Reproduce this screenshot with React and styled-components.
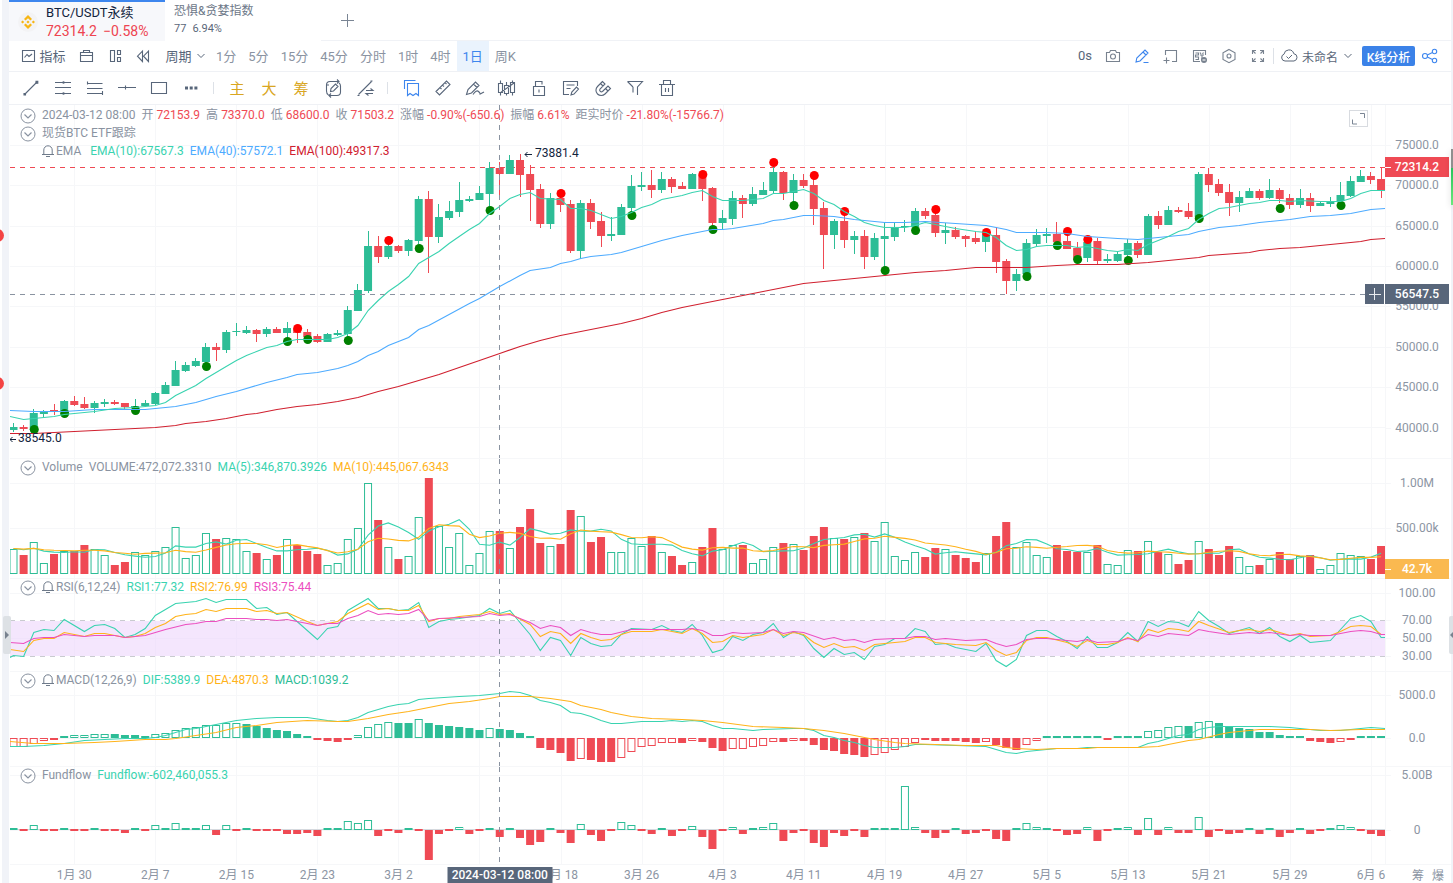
import React, { useState } from "react";
import styled, { createGlobalStyle } from "styled-components";

const GlobalStyle = createGlobalStyle`
  * { box-sizing: border-box; }
  body {
    margin: 0;
    background: #fff;
    font-family: Roboto, "Noto Sans CJK SC", sans-serif;
    font-size: 12px;
    color: #5b6779;
    overflow-x: hidden;
  }
  button { font-family: inherit; border: none; background: none; padding: 0; color: inherit; cursor: pointer; }
`;

const UP = "#2dbd96";
const DOWN = "#ef4a54";
const TEAL = "#39d3b0";
const YELLOW = "#ffb31a";
const BLUE = "#4dabff";
const CRIMSON = "#d0202f";
const PINK = "#ec4fc0";
const GRID = "#f6f7f9";
const SLATE = "#58667a";
const MUTED = "#8a93a1";
const DASH = "#8a93a1";

const Page = styled.div`
  display: flex;
  position: relative;
  min-height: 100vh;
  overflow: hidden;
`;

const Gutter = styled.div`
  flex: none;
  width: ${({ $wide }) => ($wide ? "9px" : "2px")};
  background: #f1f3f8;
  border-left: ${({ $wide }) => ($wide ? "2px solid #fff" : "none")};
`;

const Main = styled.main`
  flex: 1;
  min-width: 0;
`;

const Header = styled.header`
  display: flex;
  height: 41px;
`;

const Tab = styled.button`
  display: flex;
  align-items: center;
  gap: 8px;
  text-align: left;
  width: 156px;
  padding: ${({ $active }) => ($active ? "0 9px" : "0 9px 3px")};
  background: ${({ $active }) => ($active ? "#f7f8fb" : "#fff")};
  border-top: 2px solid ${({ $active }) => ($active ? "#3d86ee" : "transparent")};
`;

const TabTitle = styled.div`
  font-size: ${({ $main }) => ($main ? "13px" : "12px")};
  line-height: 18px;
  color: ${({ $main }) => ($main ? "#12243d" : "#6d7888")};
`;

const TabPrice = styled.div`
  display: flex;
  gap: 6px;
  font-size: ${({ $main }) => ($main ? "14px" : "11px")};
  line-height: 18px;
  color: ${({ $main }) => ($main ? "#ee4450" : "#5b6779")};
`;

const AddArea = styled.div`
  flex: 1;
  padding: 12px 19px;
  border-bottom: 1px solid #f0f2f6;
`;

const Toolbar = styled.div`
  display: flex;
  align-items: center;
  height: ${({ $tall }) => ($tall ? "33px" : "31px")};
  padding: ${({ $tall }) => ($tall ? "0 6px" : "0 11px 0 7px")};
  border-bottom: 1px solid #eff1f5;
`;

const ToolButton = styled.button`
  display: flex;
  align-items: center;
  justify-content: center;
  gap: ${({ $gap }) => $gap || 0}px;
  height: 100%;
  width: ${({ $width }) => $width}px;
  color: ${({ $tone }) => $tone || SLATE};
`;

const ToolText = styled.span`
  padding-bottom: 2px;
  font-size: ${({ $large }) => ($large ? "15px" : "13px")};
  white-space: nowrap;
`;

const Period = styled.button`
  height: 100%;
  padding: 0 6px 2px;
  font-size: 13px;
  white-space: nowrap;
  color: ${({ $active }) => ($active ? "#3d86ee" : MUTED)};
  background: ${({ $active }) => ($active ? "#eaf3fd" : "none")};
`;

const Spacer = styled.div`
  flex: 1;
`;

const Divider = styled.div`
  width: 1px;
  height: ${({ $tall }) => ($tall ? "16px" : "12px")};
  margin: ${({ $tall }) => ($tall ? "0 1px" : "0 7px 0 6px")};
  background: #dde1e7;
`;

const LayoutName = styled.button`
  display: flex;
  align-items: center;
  font-size: 12px;
  padding: 0 4px;
`;

const Analyse = styled.button`
  width: 53px;
  height: 20px;
  margin: 0 5px 0 6px;
  border-radius: 2px;
  background: #3b82e8;
  color: #fff;
  font-size: 12px;
  font-weight: 500;
  white-space: nowrap;
`;

const Pane = styled.section`
  display: flex;
  height: ${({ $height }) => $height}px;
  margin-left: 1px;
  border-bottom: 1px solid ${GRID};
`;

const Plot = styled.div`
  position: relative;
  flex: 1;
  min-width: 0;

  > svg {
    display: block;
    width: 100%;
    height: 100%;
  }
`;

const Axis = styled.div`
  position: relative;
  flex: none;
  width: 66px;
  border-left: 1px solid ${GRID};

  > svg { display: block; }

  text {
    fill: #8c95a3;
    font-size: 12px;
    text-anchor: middle;
  }
`;

const Legend = styled.div`
  position: absolute;
  top: ${({ $top }) => $top}px;
  left: 10px;
`;

const LegendRow = styled.div`
  display: flex;
  align-items: center;
  gap: 6px;
  height: 18px;
  line-height: 18px;
  padding-left: ${({ $indent }) => ($indent ? "22px" : "0")};
  white-space: nowrap;
`;

const LegendName = styled.span`
  display: flex;
  align-items: center;
  gap: 2px;
  height: 18px;
  color: ${MUTED};
`;

const LegendValue = styled.span`
  color: ${({ $color }) => $color};
`;

const Field = styled.span`
  display: flex;
  align-items: baseline;
  gap: 3px;
  height: 18px;
  color: ${MUTED};
`;

const Toggle = styled.button`
  width: 16px;
  height: 16px;
  margin-top: 2px;

  svg { display: block; }
`;

const ExpandButton = styled.button`
  position: absolute;
  top: 5px;
  right: 17px;
  width: 19px;
  height: 17px;
  border: 1px solid #d8dbe0;

  svg { display: block; }
`;

const PriceTag = styled.div`
  position: absolute;
  top: ${({ $top }) => $top}px;
  left: -1px;
  width: 64px;
  height: 20px;
  line-height: 20px;
  text-align: center;
  font-weight: 500;
  color: #fff;
  background: ${({ $color }) => $color};

  &::before {
    content: "";
    position: absolute;
    left: 0;
    top: 10px;
    width: 6px;
    height: ${({ $tick }) => ($tick ? "1px" : "0")};
    background: #fff;
  }
`;

const AddAlert = styled.button`
  position: absolute;
  top: 179px;
  right: 0;
  width: 20px;
  height: 20px;
  background: ${SLATE};
  border-right: 1px solid #fff;

  svg { display: block; }
`;

const TimeAxis = styled.div`
  display: flex;
  height: 19px;
  margin-left: 1px;

  text {
    fill: #8c95a3;
    font-size: 12px;
    text-anchor: middle;
  }
`;

const TimeTag = styled.div`
  position: absolute;
  top: 2px;
  left: ${({ $at }) => $at}%;
  transform: translateX(-50%);
  width: 105px;
  height: 17px;
  line-height: 17px;
  text-align: center;
  font-weight: 500;
  color: #fff;
  background: ${SLATE};
`;

const AxisButtons = styled.div`
  display: flex;
  align-items: center;
  justify-content: center;
  gap: 8px;
  flex: none;
  width: 66px;
  padding-left: 20px;
  color: #8c95a3;

  button { font-size: 12px; }
`;

const SideHandle = styled.button`
  position: absolute;
  top: 616px;
  ${({ $right }) => ($right ? "right: -4px;" : "left: 3px;")}
  width: 8px;
  height: 38px;
  border-radius: 2px;
  background: #dde1e5;

  svg { display: block; }
`;

const EdgeDot = styled.div`
  position: absolute;
  left: -9px;
  top: ${({ $top }) => $top}px;
  width: 13px;
  height: 13px;
  border-radius: 50%;
  background: #f44343;
`;

const EdgeBar = styled.div`
  position: absolute;
  right: 0;
  top: 149px;
  width: 2px;
  height: 56px;
  background: linear-gradient(#8f8f8f 19px, #27c45c 19px, #6be87c);
  box-shadow: 0 2px 6px rgba(0, 0, 0, 0.2);
`;

// [rising, body top, body bottom, high, low]
const candles = [
  [1, 427, 430, 423, 432], [0, 427, 429, 425, 431], [1, 413, 430, 409, 430], [1, 411, 414, 410, 417],
  [0, 410, 411, 404, 415], [1, 401, 411, 400, 412], [0, 401, 405, 396, 406], [0, 404, 408, 397, 409],
  [1, 403, 408, 401, 413], [1, 402, 404, 399, 407], [0, 402, 404, 400, 405], [0, 403, 407, 403, 409],
  [1, 406, 408, 399, 413], [1, 403, 406, 400, 407], [1, 393, 404, 392, 405], [1, 385, 394, 382, 394],
  [1, 370, 386, 361, 386], [1, 365, 371, 362, 372], [1, 361, 366, 358, 367], [1, 347, 362, 343, 364],
  [0, 347, 350, 343, 361], [1, 332, 350, 330, 353], [1, 331, 332, 323, 336], [1, 330, 333, 326, 334],
  [0, 330, 334, 329, 342], [1, 329, 334, 327, 337], [0, 329, 333, 327, 333], [1, 328, 333, 322, 338],
  [0, 329, 333, 328, 343], [0, 332, 337, 329, 340], [0, 336, 342, 334, 343], [1, 334, 342, 333, 342],
  [1, 333, 335, 330, 336], [1, 310, 334, 306, 337], [1, 290, 311, 284, 311], [1, 246, 291, 231, 293],
  [0, 246, 257, 236, 263], [1, 246, 257, 243, 259], [0, 246, 251, 245, 253], [1, 240, 251, 239, 256],
  [1, 199, 241, 196, 244], [0, 199, 237, 191, 273], [1, 217, 237, 204, 243], [1, 211, 218, 201, 220],
  [1, 200, 212, 182, 217], [1, 199, 201, 196, 202], [1, 193, 200, 186, 200], [1, 168, 194, 162, 208],
  [0, 168, 174, 162, 200], [1, 160, 174, 155, 174], [0, 160, 175, 154, 197], [0, 174, 190, 165, 221],
  [0, 189, 224, 184, 228], [1, 198, 224, 193, 229], [0, 198, 205, 193, 212], [0, 204, 251, 200, 253],
  [1, 203, 251, 200, 259], [0, 203, 222, 199, 229], [0, 221, 236, 212, 247], [1, 234, 236, 217, 241],
  [1, 207, 235, 204, 235], [1, 186, 208, 175, 212], [1, 185, 187, 172, 191], [0, 185, 190, 170, 198],
  [1, 179, 190, 172, 193], [0, 179, 187, 177, 193], [0, 186, 189, 182, 189], [1, 174, 189, 173, 189],
  [0, 175, 189, 173, 201], [0, 188, 223, 187, 228], [1, 218, 223, 210, 229], [1, 198, 219, 191, 225],
  [0, 198, 204, 195, 218], [1, 194, 204, 187, 206], [1, 190, 195, 182, 195], [1, 172, 191, 162, 193],
  [0, 172, 193, 171, 200], [1, 180, 193, 174, 205], [0, 180, 186, 174, 188], [0, 185, 209, 175, 225],
  [0, 208, 235, 202, 269], [1, 221, 235, 219, 249], [0, 221, 240, 211, 248], [1, 236, 240, 231, 254],
  [0, 236, 257, 230, 269], [1, 238, 257, 233, 260], [1, 236, 239, 222, 269], [1, 227, 237, 223, 241],
  [1, 226, 227, 220, 232], [1, 211, 227, 208, 230], [0, 211, 216, 208, 219], [0, 215, 233, 210, 237],
  [1, 230, 233, 223, 244], [0, 230, 237, 227, 239], [0, 236, 239, 235, 247], [0, 238, 242, 232, 244],
  [1, 234, 242, 232, 252], [0, 235, 262, 227, 273], [0, 261, 281, 259, 294], [1, 274, 281, 269, 291],
  [1, 243, 274, 239, 276], [1, 235, 244, 229, 246], [1, 234, 236, 228, 243], [0, 234, 242, 222, 244],
  [0, 241, 249, 232, 249], [0, 248, 260, 242, 261], [1, 242, 258, 240, 262], [0, 241, 261, 238, 265],
  [1, 259, 261, 254, 263], [1, 254, 261, 251, 262], [1, 243, 255, 239, 258], [0, 243, 255, 241, 258],
  [1, 216, 255, 214, 255], [0, 216, 225, 211, 229], [1, 210, 225, 206, 225], [0, 210, 212, 207, 213],
  [0, 211, 217, 203, 219], [1, 174, 217, 172, 217], [0, 174, 185, 168, 192], [0, 184, 193, 179, 196],
  [0, 192, 203, 184, 216], [1, 197, 203, 191, 212], [1, 191, 198, 188, 198], [0, 191, 198, 189, 200],
  [1, 190, 198, 179, 199], [0, 190, 199, 188, 203], [0, 198, 205, 194, 209], [1, 198, 205, 189, 208],
  [0, 198, 206, 193, 212], [1, 203, 206, 201, 206], [1, 202, 204, 197, 207], [1, 195, 201, 182, 203],
  [1, 181, 196, 176, 197], [1, 176, 182, 170, 182], [0, 176, 180, 172, 184], [0, 179, 190, 168, 198],
];

// [bar, y]
const sellDots = [
  [28, 328], [37, 240], [54, 193], [68, 174], [75, 162], [79, 175], [82, 211], [91, 209], [96, 232], [104, 231], [106, 239],
];
const buyDots = [
  [2, 429], [5, 413], [12, 410], [19, 366], [27, 341], [29, 339], [33, 340], [40, 248], [47, 210], [61, 215], [69, 229],
  [77, 205], [86, 270], [89, 230], [100, 276], [103, 245], [105, 259], [110, 260], [117, 218], [125, 208], [131, 205],
];

// line data: bar, y, bar, y ...
const ema10 = [
  -0.35, 416, 1, 419, 2, 418, 4, 416, 5, 414, 6, 413, 8, 411, 10, 408, 12, 407, 13, 406, 14, 405, 15, 402, 16, 395,
  18, 385, 19, 378, 20, 372, 21, 366, 22, 360, 23, 355, 24, 351, 25, 347, 26, 345, 27, 341, 28, 339, 30, 339, 31, 339,
  32, 337, 33, 333, 34, 325, 35, 310, 36, 300, 37, 291, 38, 284, 39, 276, 40, 263, 41, 257, 42, 251, 43, 243, 44, 236,
  45, 229, 46, 223, 47, 213, 48, 206, 49, 198, 50, 194, 51, 192, 52, 198, 54, 199, 55, 208, 56, 208, 57, 210, 58, 214,
  59, 218, 60, 216, 61, 212, 62, 207, 63, 204, 64, 199, 65, 197, 66, 195, 67, 192, 68, 190, 69, 196, 70, 200, 72, 200,
  73, 199, 74, 198, 75, 193, 76, 193, 77, 191, 78, 189, 79, 193, 80, 200, 81, 204, 82, 211, 83, 216, 84, 222, 85, 225,
  86, 227, 88, 227, 89, 225, 90, 222, 91, 224, 93, 228, 95, 231, 96, 232, 97, 237, 98, 245, 99, 250, 100, 249, 101, 246,
  102, 245, 104, 245, 105, 247, 106, 246, 107, 248, 108, 250, 109, 251, 110, 249, 111, 250, 112, 244, 113, 240, 114, 236,
  115, 231, 116, 228, 117, 219, 118, 213, 119, 208, 120, 207, 121, 205, 122, 203, 123, 202, 124, 200, 125, 200, 126, 201,
  127, 200, 129, 201, 131, 201, 132, 198, 133, 193, 134, 190, 135.4, 190,
];
const ema40 = [
  -0.35, 410, 2, 411, 5, 411, 8, 409, 13, 409, 15, 407, 16, 406, 18, 402, 19, 399, 20, 396, 22, 391, 24, 385, 25, 382,
  27, 377, 28, 374, 30, 372, 32, 368, 33, 365, 34, 361, 35, 355, 36, 351, 37, 345, 39, 337, 40, 329, 41, 325, 43, 314,
  45, 303, 46, 298, 47, 292, 48, 286, 50, 275, 51, 270, 53, 267, 54, 263, 55, 261, 56, 258, 57, 256, 59, 254, 60, 252,
  62, 246, 64, 240, 66, 235, 68, 231, 69, 229, 70, 229, 71, 228, 74, 223, 75, 220, 76, 219, 78, 215, 79, 215, 81, 216,
  83, 219, 86, 222, 88, 222, 90, 221, 93, 223, 96, 225, 98, 229, 99, 232, 102, 232, 104, 233, 106, 236, 109, 238,
  111, 239, 114, 236, 116, 234, 117, 231, 119, 227, 121, 225, 123, 222, 126, 219, 128, 216, 130, 215, 131, 214, 132, 213,
  134, 209, 135.4, 208,
];
const ema100 = [
  -0.35, 433, 2, 433, 6, 431, 10, 429, 14, 427, 16, 425, 17, 423, 19, 421, 21, 418, 23, 414, 24, 413, 26, 409, 28, 406,
  30, 404, 32, 401, 34, 397, 36, 391, 38, 386, 40, 380, 42, 374, 44, 367, 46, 360, 48, 353, 50, 346, 52, 340, 54, 335,
  55, 333, 57, 329, 60, 323, 62, 318, 64, 312, 66, 307, 68, 303, 71, 297, 74, 291, 77, 285, 78, 283, 81, 280, 83, 278,
  86, 275, 89, 272, 92, 270, 95, 267, 100, 267, 103, 265, 105, 264, 109, 264, 112, 262, 116, 258, 117, 257, 118, 255,
  122, 252, 123, 250, 125, 248, 127, 247, 130, 244, 133, 241, 134, 239, 135.4, 238,
];

const volume = [
  25, 19, 32, 11, 20, 23, 23, 29, 25, 19, 9, 12, 22, 19, 23, 27, 47, 16, 19, 41, 35, 36, 35, 23, 21, 15, 19, 35, 29, 23,
  20, 9, 11, 35, 46, 91, 54, 27, 15, 18, 57, 96, 48, 27, 41, 9, 21, 43, 43, 26, 47, 65, 31, 28, 30, 64, 58, 32, 37, 22,
  22, 36, 28, 38, 22, 18, 9, 12, 27, 46, 25, 29, 29, 11, 15, 27, 31, 30, 24, 38, 47, 36, 35, 37, 41, 33, 52, 18, 14, 22,
  17, 26, 25, 19, 16, 12, 21, 38, 52, 27, 32, 19, 17, 29, 23, 22, 22, 29, 10, 9, 24, 23, 33, 22, 20, 10, 14, 33, 25, 19,
  28, 17, 8, 9, 15, 22, 15, 18, 19, 5, 9, 21, 19, 18, 15, 28,
];

const rsi6 = [
  -0.35, 657, 0, 655, 1, 656, 2, 632, 3, 629, 4, 630, 5, 619, 7, 631, 8, 625, 9, 624, 10, 628, 11, 637, 12, 634, 13, 628,
  14, 615, 16, 603, 17, 602, 18, 601, 19, 598, 20, 602, 21, 599, 23, 599, 24, 608, 25, 607, 26, 614, 27, 612, 28, 621,
  30, 639, 31, 628, 32, 626, 33, 610, 34, 604, 35, 598, 36, 608, 37, 608, 38, 610, 39, 609, 40, 602, 41, 627, 42, 621,
  43, 619, 44, 618, 46, 615, 47, 608, 48, 613, 49, 610, 50, 622, 51, 634, 52, 650, 53, 637, 54, 640, 55, 655, 56, 637,
  57, 643, 58, 646, 59, 645, 60, 634, 61, 628, 63, 629, 64, 625, 65, 630, 66, 632, 67, 624, 68, 635, 69, 652, 70, 649,
  71, 636, 72, 640, 73, 634, 74, 632, 75, 623, 76, 637, 77, 631, 78, 635, 79, 648, 80, 657, 81, 648, 82, 654, 83, 652,
  84, 659, 85, 646, 86, 644, 87, 638, 88, 638, 89, 628, 90, 631, 91, 644, 92, 643, 93, 647, 95, 651, 96, 643, 97, 660,
  98, 666, 99, 659, 100, 635, 101, 630, 102, 630, 103, 636, 104, 641, 105, 648, 106, 636, 107, 647, 108, 647, 109, 642,
  110, 632, 111, 641, 112, 621, 113, 626, 114, 621, 115, 622, 116, 626, 117, 611, 118, 620, 119, 626, 120, 633, 121, 630,
  122, 627, 123, 633, 124, 627, 125, 636, 126, 641, 127, 635, 128, 642, 129, 641, 130, 640, 131, 629, 132, 618, 133, 615,
  134, 621, 135, 637, 135.4, 637,
];
const rsi12 = [
  -0.35, 649, 1, 651, 2, 640, 3, 638, 4, 638, 5, 632, 6, 634, 7, 636, 8, 633, 9, 633, 10, 635, 11, 637, 12, 636, 13, 633,
  14, 627, 15, 623, 16, 616, 17, 614, 18, 613, 19, 609, 20, 611, 21, 608, 23, 608, 24, 611, 25, 610, 26, 613, 27, 612,
  29, 621, 30, 625, 31, 623, 32, 621, 33, 613, 35, 603, 36, 609, 37, 608, 38, 610, 39, 610, 40, 605, 41, 621, 42, 618,
  43, 618, 44, 616, 46, 614, 47, 611, 48, 614, 49, 613, 51, 624, 52, 636, 53, 631, 54, 633, 55, 643, 56, 633, 57, 637,
  58, 640, 59, 639, 60, 634, 61, 631, 63, 631, 64, 629, 66, 633, 67, 628, 68, 633, 69, 642, 70, 641, 71, 635, 72, 637,
  74, 634, 75, 629, 76, 635, 77, 632, 78, 634, 79, 642, 80, 647, 81, 643, 82, 647, 83, 646, 84, 650, 85, 644, 87, 642,
  88, 641, 89, 637, 90, 637, 91, 642, 93, 644, 95, 645, 96, 642, 97, 650, 98, 655, 99, 652, 100, 640, 101, 637, 102, 637,
  104, 642, 105, 646, 106, 640, 107, 644, 108, 644, 109, 642, 110, 637, 111, 641, 112, 629, 113, 632, 114, 628, 115, 629,
  116, 631, 117, 621, 118, 625, 120, 632, 121, 630, 122, 629, 123, 631, 124, 629, 126, 635, 127, 633, 128, 636, 130, 635,
  131, 631, 132, 626, 133, 625, 134, 626, 135, 634, 135.4, 634,
];
const rsi24 = [
  -0.35, 642, 1, 643, 2, 638, 3, 637, 4, 637, 5, 634, 7, 636, 8, 635, 10, 635, 11, 637, 13, 635, 15, 629, 17, 624, 18, 623,
  19, 621, 20, 621, 21, 618, 23, 618, 24, 619, 25, 619, 26, 620, 27, 619, 29, 623, 30, 625, 31, 623, 32, 623, 33, 618,
  34, 615, 35, 610, 36, 614, 37, 613, 38, 614, 39, 613, 40, 609, 41, 620, 42, 618, 44, 617, 46, 616, 47, 613, 48, 615,
  49, 614, 51, 622, 52, 628, 53, 625, 54, 627, 55, 635, 56, 629, 57, 632, 58, 634, 59, 634, 61, 629, 63, 629, 66, 629,
  67, 628, 68, 630, 69, 635, 70, 635, 71, 632, 72, 633, 74, 632, 75, 629, 76, 633, 77, 631, 78, 632, 80, 639, 81, 637,
  82, 640, 83, 639, 84, 642, 85, 639, 87, 638, 88, 638, 89, 636, 90, 636, 91, 639, 92, 638, 94, 640, 96, 639, 97, 643,
  98, 646, 99, 644, 100, 639, 101, 638, 102, 638, 104, 640, 105, 641, 106, 639, 107, 642, 109, 641, 110, 638, 111, 640,
  112, 634, 113, 636, 114, 633, 116, 635, 117, 629, 118, 631, 120, 634, 121, 633, 122, 632, 123, 633, 124, 632, 126, 635,
  127, 634, 128, 635, 130, 635, 131, 633, 132, 631, 133, 630, 134, 631, 135, 634, 135.4, 634,
];

const macd = [
  -9, -8.5, -6, -3, -2, 2, 3, 3.1, 4, 4.1, 4, 3, 3, 2, 4, 5, 8, 10, 11, 13, 13.1, 15, 15.1, 14, 12, 10, 8, 7, 4, 2, -2, -3,
  -4, -1, 3, 11, 14, 16, 15, 15, 19, 15, 13, 12, 11, 10, 8, 10, 9, 8, 5, 1, -10, -12, -15, -23, -21, -22, -24, -24, -20,
  -14, -9, -8, -5, -4.5, -5, -3, -4, -10, -13, -11, -10.5, -9, -8, -4, -4, -3, -3, -7, -12, -13, -16, -17, -19, -17, -15,
  -12, -9, -5, -2, -3, -3, -3, -4, -5, -4, -7, -10, -12, -7, -3, 2, 2, 2, 2, 2, 1, -1, 1, 2, 2, 7, 8, 11, 12, 12, 16, 17,
  15, 12, 10, 9, 6, 6, 3, 2, 1, -3, -4, -5, -3.5, -2, 2, 2, 1,
];
const dif = [
  -0.35, 746, 1, 746, 3, 745, 5, 743, 7, 740, 9, 739, 11, 738, 13, 738, 14, 737, 15, 735, 16, 732, 17, 729, 18, 728,
  19, 726, 20, 724, 21, 722, 22, 720, 24, 718, 26, 717, 29, 717, 31, 720, 32, 721, 33, 720, 34, 717, 35, 712, 37, 706,
  38, 704, 39, 703, 40, 699, 41, 698, 44, 696, 46, 695, 48, 693, 49, 691, 50, 692, 51, 695, 52, 700, 53, 702, 54, 705,
  55, 712, 56, 713, 57, 716, 58, 720, 59, 723, 60, 723, 62, 721, 64, 721, 65, 720, 66, 721, 67, 720, 68, 721, 69, 725,
  70, 728, 71, 728, 73, 730, 74, 729, 77, 728, 78, 728, 79, 730, 80, 735, 81, 737, 82, 740, 83, 742, 84, 745, 85, 747,
  87, 747, 88, 746, 89, 744, 90, 744, 93, 745, 96, 746, 97, 749, 98, 752, 99, 753, 100, 751, 101, 750, 103, 748, 105, 748,
  106, 747, 111, 747, 112, 743, 113, 741, 114, 738, 115, 735, 116, 734, 117, 729, 118, 727, 119, 726, 124, 726, 126, 727,
  128, 729, 129, 730, 131, 730, 133, 728, 134, 727, 135.4, 728,
];
const dea = [
  -0.35, 741, 2, 743, 5, 743, 8, 742, 10, 741, 13, 739, 15, 739, 16, 738, 18, 735, 20, 732, 22, 727, 24, 725, 26, 722,
  29, 720, 32, 721, 33, 721, 35, 718, 37, 714, 39, 711, 41, 707, 43, 703, 45, 701, 47, 698, 48, 696, 51, 696, 53, 698,
  55, 701, 56, 705, 58, 709, 59, 712, 61, 716, 63, 718, 66, 719, 68, 720, 69, 721, 70, 722, 73, 726, 76, 727, 78, 728,
  80, 730, 82, 733, 83, 735, 84, 737, 85, 739, 87, 742, 88, 743, 91, 744, 94, 745, 97, 745, 98, 747, 99, 748, 101, 749,
  103, 748, 106, 748, 107, 747, 111, 747, 113, 746, 115, 742, 116, 740, 117, 739, 119, 734, 120, 732, 122, 730, 123, 729,
  128, 729, 130, 730, 133, 729, 135.4, 729,
];

const fundflow = [
  2, -1, 5, -1, -1, 2, -1, -1, 1, -1, -2, -3, 1, -1, 5, 2, 7, 2, 1, 5, -5, 5, -2, 1, -2, -2, -2, -4, -4, -3, -6, 2, 1, 9,
  7, 10, -6, -1, -3, 2, -2, -30, -4, -1, 3, -4, -2, 2, -7, 2, -8, -15, -12, 2, -3, -13, 6, -5, -11, -2, 8, 5, -1, -4, 2,
  -6, -2, 4, -7, -19, -2, 3, -4, 2, 3, 7, -11, -3, -2, -13, -17, -3, -6, -2, -7, 2, 2, 2, 44, 3, -3, -8, -3, 1, -4, -3,
  -2, -9, -11, 1, 7, 3, 2, -2, -5, -4, 3, -11, -1, 1, 3, -5, 12, -5, 3, -3, -3, 13, -7, -1, -4, -3, 2, -4, 2, -7, -3, 2,
  -4, -2, 2, 5, 3, -2, -4, -6,
];

const dates = [
  "1月 30", "2月 7", "2月 15", "2月 23", "3月 2", "3月 10", "3月 18", "3月 26", "4月 3", "4月 11", "4月 19", "4月 27",
  "5月 5", "5月 13", "5月 21", "5月 29", "6月 6",
];

const WIDTH = 1375;
const CURSOR = 48;
const xAt = (i) => 3.5 + i * 10.13;
const dateBar = (k) => 6 + k * 8;

const average = (values, size) => {
  const padded = [...Array(size - 1).fill(25), ...values];
  return values.flatMap((_, i) => [i, 573 - padded.slice(i, i + size).reduce((a, b) => a + b, 0) / size]);
};

const Line = ({ data, color }) => {
  const points = [];
  for (let i = 0; i < data.length; i += 2) points.push(`${xAt(data[i]).toFixed(1)},${data[i + 1] + 0.5}`);
  return <polyline points={points.join(" ")} fill="none" stroke={color} strokeWidth="1.1" />;
};

const Bar = ({ i, top, height, color, hollow }) =>
  hollow ? (
    <rect x={xAt(i) - 3.5} y={top + 0.5} width="7" height={Math.max(height - 1, 1)} fill="#fff" stroke={color} />
  ) : (
    <rect x={xAt(i) - 4} y={top} width="8" height={height} fill={color} />
  );

const Canvas = ({ top, height, lines, children }) => (
  <svg viewBox={`0 ${top} ${WIDTH} ${height}`} preserveAspectRatio="none">
    {dates.map((d, k) => {
      const x = Math.round(xAt(dateBar(k))) + 0.5;
      return <line key={d} x1={x} x2={x} y1={top} y2={top + height} stroke={GRID} />;
    })}
    {lines.map((y) => <line key={y} x1="0" x2={WIDTH} y1={y + 0.5} y2={y + 0.5} stroke={GRID} />)}
    {children}
    <line x1="489.5" x2="489.5" y1={top} y2={top + height} stroke={DASH} strokeDasharray="5 5" />
  </svg>
);

const Scale = ({ top, height, ticks }) => (
  <svg width="65" height={height} viewBox={`0 ${top} 65 ${height}`}>
    {ticks.map(([label, y]) => (
      <g key={label}>
        <line x1="0" x2="5" y1={y + 0.5} y2={y + 0.5} stroke={GRID} />
        <text x="31" y={y + 4}>{label}</text>
      </g>
    ))}
  </svg>
);

const Icon = ({ children, width = 1.1 }) => (
  <svg width="20" height="20" viewBox="0 0 20 20" fill="none" stroke="currentColor" strokeWidth={width} aria-hidden="true">
    {children}
  </svg>
);

const Collapse = () => (
  <Toggle aria-label="collapse">
    <svg width="16" height="16" viewBox="0 0 16 16" fill="none" stroke="#8a93a1">
      <circle cx="8" cy="8" r="7" />
      <path d="M4.5 6.5 8 10l3.5-3.5" strokeWidth="1.2" />
    </svg>
  </Toggle>
);

const Bell = () => (
  <svg width="12" height="14" viewBox="0 0 12 14" fill="none" stroke="#6f7b8b">
    <path d="M0 10.5h12M1.8 10.5V6a4.2 4.2 0 0 1 8.4 0v4.5M4 12.5h4" />
  </svg>
);

const ChevronDown = () => (
  <svg width="8" height="6" viewBox="0 0 8 6" fill="none" stroke="currentColor"><path d="M.5 1 4 4.5 7.5 1" /></svg>
);

const tools = [
  { name: "trend line", icon: <><path d="M4.5 15.5 15.5 4.5" /><path d="M3 17h1.500v-1.500H3zM15 5.200h1.800V3.400H15z" fill="currentColor" /></> },
  { name: "parallel lines", icon: <><path d="M2 4.5h16M2 9.5h16M2 15.5h16" /><circle cx="10.5" cy="4.5" r="1.2" fill="currentColor" stroke="none" /><circle cx="10.5" cy="15.5" r="1.2" fill="currentColor" stroke="none" /></> },
  { name: "fib lines", icon: <path d="M2 5.5h15.5M2 10.5h15.5M2 15.5h15.5M2.5 3.5v3M17.5 13v4" /> },
  { name: "horizontal line", icon: <path d="M1 9.5h18M8.5 7.5v4" /> },
  { name: "rectangle", icon: <path d="M2.5 4.5h15v11h-15z" /> },
  { name: "more", icon: <path d="M4 10h3M8.7 10h3M13.4 10h3" strokeWidth="3" /> },
  null,
  { name: "主", gold: true },
  { name: "大", gold: true },
  { name: "筹", gold: true },
  { name: "sync drawing", icon: <path d="M16 3.5H7Q3.5 3.5 3.5 7v6q0 3 2 4M14 1.5l2 2-2 2M4 7h2M6.5 17.5H14q3.500 0 3.500-3.500V8q0-2-1.500-3M8 19.500l-2-2 2-2M7.500 13.500l.5-3L12.500 6l2.500 2.500-4.500 4.500z" /> },
  { name: "replace line", icon: <path d="M3.5 16.5 16.5 3.5M2.5 17.500h2M15.500 3h2M11 12.500h7l-2.500-2M18 15.500h-7l2.500 2" /> },
  null,
  { name: "bookmark", blue: true, icon: <path d="M6.500 5.500h11v12l-2.500-2-3 2-3-2-2.500 2zM3.500 11V2.500h11" /> },
  { name: "ruler", icon: <path d="M3 13.500 13.500 3 17 6.500 6.500 17zM7 9.500l1.500 1.500M9.500 7l1.500 1.500M12 4.500l1.500 1.500" /> },
  { name: "brush", icon: <path d="m1.500 16.500 1.500-5L10.500 4 14 7.500 6.500 15zM8.500 6l3.500 3.500M8 16.500q3.500-5 5.500-3t1.500 2.500 4-2" /> },
  { name: "pattern", icon: <path d="M1.500 5.500h4v9h-4zM7.500 7.500h4v8h-4zM13.500 4.500h4v10h-4zM3.500 2.500v3M3.500 14.500v3M9.500 4v3.500M9.500 15.500v2M15.500 2.500v2M15.500 14.500v3M3 15 17 5" /> },
  { name: "lock", icon: <path d="M4.500 8.500h11v9h-11zM6.500 8.500v-5h6.500v3M10 11.500v3" /> },
  { name: "notes", icon: <path d="M16.500 8V3.500h-14v13H8M5.500 7h8M5.500 10.500h4M10 17l.8-3L15.500 9l2 2-4.500 5z" /> },
  { name: "magnet", icon: <path d="M9.500 3.500 4.500 8.500a5 5 0 0 0 7.500 7.500L17.500 10.500 15 8l-5.500 5.500a1.800 1.800 0 0 1-2.500-2.500L12 6zM7.500 5.500 10 8M12.500 10.500 15 13" /> },
  { name: "filter", icon: <path d="M2.500 3.500h15L12.500 9v8M8 9v5.500M2.500 3.500 8 9" /> },
  { name: "delete", icon: <path d="M2 6.500h16M4.500 6.500v11h11v-11M6.500 6V2.500h7V6M8.500 10v4M11.500 10v4" /> },
];

const periods = ["1分", "5分", "15分", "45分", "分时", "1时", "4时", "1日", "周K"];

const rightTools = [
  { name: "screenshot", icon: <><path d="M3.500 6.500h3l1-2h5l1 2h3v9h-13z" /><circle cx="10" cy="10.500" r="2.500" /></> },
  { name: "draw", blue: true, icon: <path d="M4 16l.8-4L13 4l3 3-8 8zM11 6l3 3M11.500 16.500h5" /> },
  { name: "add pane", icon: <path d="M4.500 9V4.500h11v11H11M2.500 14.500h6M5.500 11.500v6" /> },
  { name: "bullet comments", icon: <><path d="M15.500 9V4.500h-12v11H10M5.500 7h3v2h-3v2h3v2.500h-3M10 6.500l1 1.500M13.500 6.500l-1 1.500M10 9h4M12 9v5" /><circle cx="14" cy="14" r="3" fill="#78828f" stroke="none" /><path d="M12.500 14h3" stroke="#fff" /></> },
  { name: "settings", icon: <><path d="m10 3.500 6 3.300v6.600l-6 3.300-6-3.300V6.800z" /><circle cx="10" cy="10" r="2" /></> },
  { name: "fullscreen", icon: <path d="M4.500 8V4.500H8M12 4.500h3.500V8M15.500 12v3.500H12M8 15.500H4.500V12M4.500 4.500l3 3M15.500 4.500l-3 3M4.500 15.500l3-3M15.500 15.500l-3-3" /> },
];

const candleInfo = [
  ["开", "72153.9"], ["高", "73370.0"], ["低", "68600.0"], ["收", "71503.2"],
  ["涨幅", "-0.90%(-650.6)"], ["振幅", "6.61%"], ["距实时价", "-21.80%(-15766.7)"],
];

const Indicator = ({ name, bell, values }) => (
  <>
    <LegendName>{bell && <Bell />}{name}</LegendName>
    {values.map(([text, color]) => <LegendValue key={text} $color={color}>{text}</LegendValue>)}
  </>
);

const App = () => {
  const [period, setPeriod] = useState("1日");

  return (
    <Page>
      <GlobalStyle />
      <Gutter $wide />
      <Main>
        <Header>
          <Tab $active>
            <svg width="20" height="20" viewBox="0 0 20 20">
              <circle cx="10" cy="10" r="10" fill="#f3f3f5" />
              <path d="m10 3 4 4-1.600 1.600L10 6.200 7.600 8.600 6 7zM4.600 8.400 6.200 10l-1.600 1.600L3 10zM15.400 8.400 17 10l-1.600 1.600-1.600-1.600zM10 8.400l1.600 1.600-1.600 1.600L8.400 10zM10 17l-4-4 1.600-1.600 2.400 2.400 2.400-2.400L14 13z" fill="#f7b614" />
            </svg>
            <div>
              <TabTitle $main>BTC/USDT永续</TabTitle>
              <TabPrice $main><span>72314.2</span><span>−0.58%</span></TabPrice>
            </div>
          </Tab>
          <Tab>
            <div>
              <TabTitle>恐惧&amp;贪婪指数</TabTitle>
              <TabPrice><span>77</span><span>6.94%</span></TabPrice>
            </div>
          </Tab>
          <AddArea>
            <button aria-label="add tab">
              <svg width="16" height="16" viewBox="0 0 16 16" stroke="#7a8594"><path d="M1 8.500h13M7.500 2v13" /></svg>
            </button>
          </AddArea>
        </Header>

        <Toolbar>
          <ToolButton $width={52} $gap={1}>
            <Icon><path d="M4.500 4.500h12v11h-12zM6.500 11.500l2.500-3 2 2 3-2.500" /></Icon><ToolText>指标</ToolText>
          </ToolButton>
          <ToolButton $width={36} aria-label="templates"><Icon><path d="M4.500 6.500h12v9h-12zM7.500 6.500v-2h6v2M4.500 9.500h12" /></Icon></ToolButton>
          <ToolButton $width={22} aria-label="layout"><Icon><path d="M5.500 4.500h4v11h-4zM12.500 4.500h3v4h-3zM12.500 11.500h3v4h-3z" /></Icon></ToolButton>
          <ToolButton $width={34} aria-label="replay"><Icon><path d="M9.500 5v10.500L4.500 10.200zM15.500 5v10.500L10.500 10.200z" /></Icon></ToolButton>
          <ToolButton $width={50} $gap={5}><ToolText>周期</ToolText><ChevronDown /></ToolButton>
          {periods.map((p) => (
            <Period key={p} $active={p === period} onClick={() => setPeriod(p)}>{p}</Period>
          ))}
          <Spacer />
          <ToolButton $width={26}><ToolText>0s</ToolText></ToolButton>
          {rightTools.map((t) => (
            <ToolButton key={t.name} $width={29} $tone={t.blue ? "#3d86ee" : "#78828f"} aria-label={t.name}>
              <Icon>{t.icon}</Icon>
            </ToolButton>
          ))}
          <Divider $tall />
          <LayoutName>
            <Icon width={1}><path d="M6 15a3.500 3.500 0 0 1-1-6.800 5 5 0 0 1 9.800-.5A3.700 3.700 0 0 1 15 15zM7.500 10.500l2 2 3.500-3.500" /></Icon>
            &nbsp;未命名&nbsp;&nbsp;<ChevronDown />
          </LayoutName>
          <Analyse>K线分析</Analyse>
          <ToolButton $width={20} $tone="#3d86ee" aria-label="share">
            <Icon><circle cx="5" cy="10" r="2.500" /><circle cx="14.500" cy="5.500" r="2.200" /><circle cx="14.500" cy="14.500" r="2.200" /><path d="m7.300 9 5.200-2.600M7.300 11l5.200 2.600" /></Icon>
          </ToolButton>
        </Toolbar>

        <Toolbar $tall>
          {tools.map((t, k) =>
            t ? (
              <ToolButton key={t.name} $width={32} $tone={t.gold ? "#d9a621" : t.blue ? "#3d86ee" : SLATE} aria-label={t.name}>
                {t.gold ? <ToolText $large>{t.name}</ToolText> : <Icon>{t.icon}</Icon>}
              </ToolButton>
            ) : (
              <Divider key={k} />
            )
          )}
        </Toolbar>

        <Pane $height={354}>
          <Plot>
            <Canvas top={105} height={353} lines={[145, 185, 226, 266, 306, 347, 387, 427]}>
              <line x1="0" x2={WIDTH} y1="167.5" y2="167.5" stroke={DOWN} strokeDasharray="5 5" />
              {candles.map(([up, a, b, hi, lo], i) => (
                <g key={i} fill={up ? UP : DOWN}>
                  <rect x={Math.round(xAt(i) - 0.5)} y={hi} width="1" height={lo - hi} />
                  <rect x={xAt(i) - 4} y={a} width="8" height={b - a} />
                </g>
              ))}
              {buyDots.map(([i, y]) => <circle key={i} cx={xAt(i) + 0.5} cy={y + 0.5} r="4.5" fill="#008000" />)}
              {sellDots.map(([i, y]) => <circle key={i} cx={xAt(i) + 0.5} cy={y + 0.5} r="4.5" fill="#ff0000" />)}
              <Line data={ema100} color={CRIMSON} />
              <Line data={ema40} color={BLUE} />
              <Line data={ema10} color={TEAL} />
              <line x1="0" x2={WIDTH} y1="294.5" y2="294.5" stroke={DASH} strokeDasharray="5 5" />
              <path d="M522 154.5h-7M517.5 152l-2.500 2.500 2.500 2.500M6 439.500H0M2.500 437 0 439.500l2.500 2.500" fill="none" stroke="#12243d" />
              <g fill="#12243d" fontSize="12">
                <text x="525" y="157">73881.4</text>
                <text x="8" y="442">38545.0</text>
              </g>
            </Canvas>
            <Legend $top={1}>
              <LegendRow>
                <Collapse />
                <LegendName>2024-03-12 08:00</LegendName>
                {candleInfo.map(([label, value]) => (
                  <Field key={label}>{label}<LegendValue $color={DOWN}>{value}</LegendValue></Field>
                ))}
              </LegendRow>
              <LegendRow><Collapse /><LegendName>现货BTC ETF跟踪</LegendName></LegendRow>
              <LegendRow $indent>
                <Indicator bell name={"EMA\u00a0"} values={[["EMA(10):67567.3", TEAL], ["EMA(40):57572.1", BLUE], ["EMA(100):49317.3", CRIMSON]]} />
              </LegendRow>
            </Legend>
            <ExpandButton aria-label="expand pane">
              <svg width="17" height="15" viewBox="0 0 17 15" fill="none" stroke="#7a8594"><path d="M10 2.500h4.500V7M2.500 8.500V13H7" /></svg>
            </ExpandButton>
            <AddAlert aria-label="add alert">
              <svg width="19" height="20" viewBox="0 0 19 20" stroke="#e9ecf0"><path d="M4 10.500h12M9.500 4v12" /></svg>
            </AddAlert>
          </Plot>
          <Axis>
            <Scale top={105} height={353} ticks={[["75000.0", 145], ["70000.0", 185], ["65000.0", 226], ["60000.0", 266], ["55000.0", 306], ["50000.0", 347], ["45000.0", 387], ["40000.0", 428]]} />
            <PriceTag $top={52} $color={DOWN} $tick>72314.2</PriceTag>
            <PriceTag $top={179} $color={SLATE}>56547.5</PriceTag>
          </Axis>
        </Pane>

        <Pane $height={120}>
          <Plot>
            <Canvas top={459} height={119} lines={[483, 528]}>
              {volume.map((v, i) => (
                <Bar key={i} i={i} top={574 - v} height={v} color={candles[i][0] ? UP : DOWN} hollow={candles[i][0]} />
              ))}
              <Line data={average(volume, 5)} color={TEAL} />
              <Line data={average(volume, 10)} color={YELLOW} />
            </Canvas>
            <Legend $top={-1}>
              <LegendRow>
                <Collapse />
                <Indicator name="Volume" values={[["VOLUME:472,072.3310", MUTED], ["MA(5):346,870.3926", TEAL], ["MA(10):445,067.6343", YELLOW]]} />
              </LegendRow>
            </Legend>
          </Plot>
          <Axis>
            <Scale top={459} height={119} ticks={[["1.00M", 483], ["500.00k", 528]]} />
            <PriceTag $top={100} $color="#fab950" $tick>42.7k</PriceTag>
          </Axis>
        </Pane>

        <Pane $height={93}>
          <Plot>
            <Canvas top={579} height={92} lines={[593, 638]}>
              <rect x="0" y="621" width={WIDTH} height="35" fill="#ecd6fc" fillOpacity="0.6" />
              <path d={`M0 620.5H${WIDTH}M0 656.5H${WIDTH}`} stroke="#c9cbd0" strokeDasharray="5 5" />
              <Line data={rsi6} color={TEAL} />
              <Line data={rsi12} color={YELLOW} />
              <Line data={rsi24} color={PINK} />
            </Canvas>
            <Legend $top={-1}>
              <LegendRow>
                <Collapse />
                <Indicator bell name="RSI(6,12,24)" values={[["RSI1:77.32", TEAL], ["RSI2:76.99", YELLOW], ["RSI3:75.44", PINK]]} />
              </LegendRow>
            </Legend>
          </Plot>
          <Axis>
            <Scale top={579} height={92} ticks={[["100.00", 593], ["70.00", 620], ["50.00", 638], ["30.00", 656]]} />
          </Axis>
        </Pane>

        <Pane $height={95}>
          <Plot>
            <Canvas top={672} height={94} lines={[695, 738]}>
              {macd.map((v, i) => {
                const h = Math.max(Math.round(Math.abs(v)), 2);
                return (
                  <Bar key={i} i={i} top={v > 0 ? 738 - h : 738} height={h} color={v > 0 ? UP : DOWN}
                    hollow={h > 2 && (i === 0 || v > macd[i - 1])} />
                );
              })}
              <Line data={dif} color={TEAL} />
              <Line data={dea} color={YELLOW} />
            </Canvas>
            <Legend $top={-1}>
              <LegendRow>
                <Collapse />
                <Indicator bell name="MACD(12,26,9)" values={[["DIF:5389.9", TEAL], ["DEA:4870.3", YELLOW], ["MACD:1039.2", UP]]} />
              </LegendRow>
            </Legend>
          </Plot>
          <Axis>
            <Scale top={672} height={94} ticks={[["5000.0", 695], ["0.0", 738]]} />
          </Axis>
        </Pane>

        <Pane $height={98}>
          <Plot>
            <Canvas top={767} height={97} lines={[775, 830]}>
              <line x1="0" x2={WIDTH} y1="829.5" y2="829.5" stroke="#d5d9de" />
              {fundflow.map((v, i) => {
                const h = Math.max(Math.abs(v), 2);
                return (
                  <Bar key={i} i={i} top={v > 0 ? 830 - h : h === 2 ? 829 : 830} height={h} color={v > 0 ? UP : DOWN} hollow={v > 2} />
                );
              })}
            </Canvas>
            <Legend $top={-1}>
              <LegendRow>
                <Collapse />
                <Indicator name="Fundflow" values={[["Fundflow:-602,460,055.3", TEAL]]} />
              </LegendRow>
            </Legend>
          </Plot>
          <Axis>
            <Scale top={767} height={97} ticks={[["5.00B", 775], ["0", 830]]} />
          </Axis>
        </Pane>

        <TimeAxis>
          <Plot>
            <svg overflow="visible">
              {dates.map((d, k) =>
                // the cursor tag covers the nearest date
                Math.abs(dateBar(k) - CURSOR) < 4 ? null : (
                  <text key={d} x={`${(xAt(dateBar(k)) / WIDTH) * 100}%`} y="14">{d}</text>
                )
              )}
            </svg>
            <TimeTag $at={(xAt(CURSOR) / WIDTH) * 100}>2024-03-12 08:00</TimeTag>
          </Plot>
          <AxisButtons><button>筹</button><button>爆</button></AxisButtons>
        </TimeAxis>
      </Main>
      <Gutter />

      <EdgeDot $top={229} />
      <EdgeDot $top={377} />
      <EdgeBar />
      <SideHandle aria-label="open left panel">
        <svg width="8" height="8" viewBox="0 0 8 8" fill="#78828f"><path d="M2 0v8l4-4z" /></svg>
      </SideHandle>
      <SideHandle $right aria-label="open right panel">
        <svg width="8" height="8" viewBox="0 0 8 8" fill="#78828f"><path d="M5 0v8L1 4z" /></svg>
      </SideHandle>
    </Page>
  );
};

export default App;
